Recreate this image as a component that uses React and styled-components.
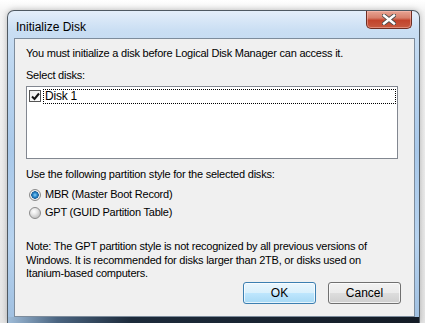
import React, { useState } from 'react'
import styled, { createGlobalStyle } from 'styled-components'

const GlobalStyle = createGlobalStyle`
  html, body {
    margin: 0;
    padding: 0;
  }
  body {
    width: 425px;
    height: 323px;
    overflow: hidden;
    background: linear-gradient(to bottom, #ffffff 0px, #f4f4f4 12px, #e6e6e6 100%);
    font-family: "Liberation Sans", Arial, sans-serif;
  }
`

function CloseGlyph() {
  return (
    <svg width="14" height="11" viewBox="0 0 14 11">
      <path
        d="M2 1.5 L12 9.5 M12 1.5 L2 9.5"
        stroke="#4a4a4a"
        strokeWidth="4.2"
        strokeLinecap="square"
      />
      <path
        d="M2 1.5 L12 9.5 M12 1.5 L2 9.5"
        stroke="#ffffff"
        strokeWidth="2.4"
        strokeLinecap="square"
      />
    </svg>
  )
}

function CheckGlyph() {
  return (
    <svg width="9" height="9" viewBox="0 0 9 9">
      <path d="M1 4.5 L3.5 7 L8 1.5" stroke="#111" strokeWidth="2" fill="none" />
    </svg>
  )
}

function App() {
  const [style, setStyle] = useState('mbr')

  return (
    <>
      <GlobalStyle />
      <Window>
        <TitleBar>
          <Title>Initialize Disk</Title>
          <CloseButton>
            <CloseGlyph />
          </CloseButton>
        </TitleBar>
        <Client>
          <Text>You must initialize a disk before Logical Disk Manager can access it.</Text>
          <Label>Select disks:</Label>
          <ListBox>
            <ListItem>
              <CheckBox>
                <CheckGlyph />
              </CheckBox>
              <FocusLabel>Disk 1</FocusLabel>
            </ListItem>
          </ListBox>
          <Label>Use the following partition style for the selected disks:</Label>
          <RadioGroup>
            <RadioRow onClick={() => setStyle('mbr')}>
              <Radio checked={style === 'mbr'} />
              MBR (Master Boot Record)
            </RadioRow>
            <RadioRow onClick={() => setStyle('gpt')}>
              <Radio checked={style === 'gpt'} />
              GPT (GUID Partition Table)
            </RadioRow>
          </RadioGroup>
          <Note>
            Note: The GPT partition style is not recognized by all previous versions of
            <br />
            Windows. It is recommended for disks larger than 2TB, or disks used on
            <br />
            Itanium-based computers.
          </Note>
          <ButtonRow>
            <Button primary>OK</Button>
            <Button>Cancel</Button>
          </ButtonRow>
        </Client>
      </Window>
    </>
  )
}

export default App

const Window = styled.div`
  margin: 10px 0 0 7px;
  width: 413px;
  height: 313px;
  box-sizing: border-box;
  border: 1px solid #4f5962;
  border-bottom: none;
  border-radius: 7px 7px 0 0;
  padding: 0 4px 6px 6px;
  background:
    linear-gradient(to right, #9fbcd8 0%, #4a6480 12%, #1d2b3b 30%, #141c26 100%) bottom / 100% 6px no-repeat,
    linear-gradient(to bottom, #e4eefa 0px, #c9def3 20px, #bcd6f0 60px, #a9c9ea 140px, #b7d3ef 230px, #9fbfe0 312px);
  box-shadow: 0 0 6px rgba(0, 0, 0, 0.25);
  display: flex;
  flex-direction: column;
`

const TitleBar = styled.div`
  height: 27px;
  flex-shrink: 0;
  display: flex;
  justify-content: space-between;
  align-items: flex-start;
`

const Title = styled.div`
  font-size: 12px;
  color: #000;
  margin: 9px 0 0 2px;
`

const CloseButton = styled.div`
  width: 46px;
  height: 18px;
  margin-right: 3px;
  box-sizing: border-box;
  border: 1px solid #6e2d22;
  border-top: none;
  border-radius: 0 0 5px 5px;
  background: linear-gradient(to bottom, #e8a493 0%, #d7806c 40%, #c2432b 55%, #c75a40 100%);
  box-shadow: inset 0 0 0 1px rgba(255, 200, 190, 0.45);
  display: flex;
  align-items: center;
  justify-content: center;
`

const Client = styled.div`
  flex: 1;
  background: #f0f0f0;
  border: 1px solid #7d8c9c;
  padding: 8px 11px 0 11px;
  font-size: 11px;
  letter-spacing: -0.22px;
  color: #000;
`

const Text = styled.div`
  line-height: 13px;
  height: 13px;
`

const Label = styled.div`
  line-height: 13px;
  margin-top: 9px;
`

const ListBox = styled.div`
  margin-top: 4px;
  width: 372px;
  height: 73px;
  box-sizing: border-box;
  border: 1px solid #828790;
  background: #fff;
  padding: 1px 1px 0 2px;
`

const ListItem = styled.div`
  display: flex;
  align-items: center;
  height: 16px;
`

const CheckBox = styled.div`
  width: 12px;
  height: 12px;
  box-sizing: border-box;
  border: 1px solid #555;
  background: linear-gradient(135deg, #e8e8e8, #ffffff);
  display: flex;
  align-items: center;
  justify-content: center;
  margin-right: 2px;
`

const FocusLabel = styled.div`
  flex: 1;
  height: 15px;
  line-height: 14px;
  box-sizing: border-box;
  outline: 1px dotted #000;
  outline-offset: -1px;
  padding-left: 2px;
  font-size: 12px;
`

const RadioGroup = styled.div`
  margin-top: 7px;
  display: flex;
  flex-direction: column;
  gap: 5px;
`

const RadioRow = styled.div`
  display: flex;
  align-items: center;
  height: 13px;
  line-height: 13px;
  padding-left: 3px;
  cursor: default;
`

const Radio = styled.span`
  width: 12px;
  height: 12px;
  box-sizing: border-box;
  border-radius: 50%;
  border: 1px solid #8a8a8a;
  background: ${props =>
    props.checked
      ? 'radial-gradient(circle, #8fd3f6 0px, #2a8ad0 2px, #1b5f98 3.5px, #f4f4f4 4px, #dcdcdc 6px)'
      : 'radial-gradient(circle at 40% 35%, #ffffff 0px, #e8e8e8 3px, #c9c9c9 6px)'};
  margin-right: 4px;
  flex-shrink: 0;
`

const Note = styled.div`
  margin-top: 21px;
  line-height: 13.5px;
  white-space: nowrap;
`

const ButtonRow = styled.div`
  display: flex;
  justify-content: flex-end;
  gap: 12px;
  margin-top: 1px;
  padding-right: 2px;
`

const Button = styled.div`
  width: 73px;
  height: 22px;
  box-sizing: border-box;
  border: 1px solid ${props => (props.primary ? '#3c7fb1' : '#707070')};
  border-radius: 3px;
  background: ${props =>
    props.primary
      ? 'linear-gradient(to bottom, #eaf6fd 0%, #d9f0fc 50%, #bee6fd 51%, #a7d9f5 100%)'
      : 'linear-gradient(to bottom, #f2f2f2 0%, #ebebeb 50%, #dddddd 51%, #cfcfcf 100%)'};
  box-shadow: inset 0 0 0 1px rgba(255, 255, 255, 0.7);
  display: flex;
  align-items: center;
  justify-content: center;
  font-size: 12px;
  letter-spacing: 0;
`
